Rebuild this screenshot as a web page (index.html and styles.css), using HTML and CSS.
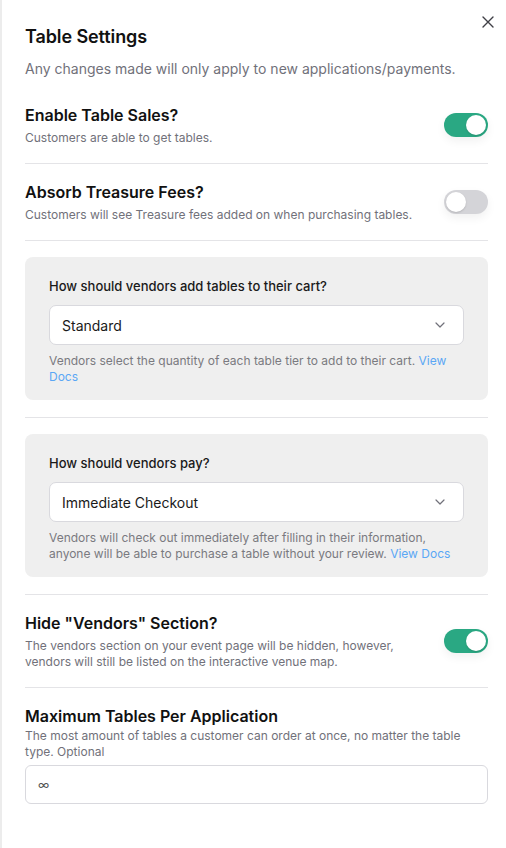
FILE: index.html
```html
<!DOCTYPE html>
<html>
<head>
<meta charset="utf-8">
<link rel="stylesheet" href="styles.css">
</head>
<body>
<div class="panel">
  <button class="close" aria-label="Close">
    <svg width="12" height="12" viewBox="0 0 12 12"><path d="M1 1L11 11M11 1L1 11" stroke="#3f3f46" stroke-width="1.4" stroke-linecap="round"/></svg>
  </button>
  <h1 class="title">Table Settings</h1>
  <p class="subtitle">Any changes made will only apply to new applications/payments.</p>

  <div class="row first">
    <div class="text">
      <h2 class="heading">Enable Table Sales?</h2>
      <p class="desc">Customers are able to get tables.</p>
    </div>
    <span class="toggle on"><span class="knob"></span></span>
  </div>

  <div class="row">
    <div class="text">
      <h2 class="heading">Absorb Treasure Fees?</h2>
      <p class="desc">Customers will see Treasure fees added on when purchasing tables.</p>
    </div>
    <span class="toggle"><span class="knob"></span></span>
  </div>

  <div class="row block">
    <div class="box">
      <div class="label">How should vendors add tables to their cart?</div>
      <div class="select">
        <span>Standard</span>
        <svg width="10" height="6" viewBox="0 0 10 6"><path d="M1 1L5 5L9 1" fill="none" stroke="#71717a" stroke-width="1.2" stroke-linecap="round" stroke-linejoin="round"/></svg>
      </div>
      <p class="help">Vendors select the quantity of each table tier to add to their cart. <a href="#">View Docs</a></p>
    </div>
  </div>

  <div class="row block">
    <div class="box">
      <div class="label">How should vendors pay?</div>
      <div class="select">
        <span>Immediate Checkout</span>
        <svg width="10" height="6" viewBox="0 0 10 6"><path d="M1 1L5 5L9 1" fill="none" stroke="#71717a" stroke-width="1.2" stroke-linecap="round" stroke-linejoin="round"/></svg>
      </div>
      <p class="help">Vendors will check out immediately after filling in their information, anyone will be able to purchase a table without your review. <a href="#">View Docs</a></p>
    </div>
  </div>

  <div class="row">
    <div class="text narrow">
      <h2 class="heading">Hide "Vendors" Section?</h2>
      <p class="desc">The vendors section on your event page will be hidden, however, vendors will still be listed on the interactive venue map.</p>
    </div>
    <span class="toggle on"><span class="knob"></span></span>
  </div>

  <div class="row last">
    <div class="text full">
      <h2 class="heading">Maximum Tables Per Application</h2>
      <p class="desc tight">The most amount of tables a customer can order at once, no matter the table type. Optional</p>
      <div class="input">∞</div>
    </div>
  </div>
</div>
</body>
</html>
```

FILE: styles.css
```css
* { box-sizing: border-box; }
html, body { margin: 0; padding: 0; background: #fff; }
body {
  font-family: Inter, "Noto Sans", sans-serif;
  color: #18181b;
  -webkit-font-smoothing: antialiased;
}
.panel {
  position: relative;
  min-height: 848px;
  border-left: 2px solid #ececec;
  padding: 25px 18px 0 23px;
}
.close {
  position: absolute;
  top: 16px;
  right: 12px;
  width: 12px;
  height: 12px;
  padding: 0;
  border: 0;
  background: none;
  display: flex;
}
.title {
  margin: 0;
  font-size: 18px;
  line-height: 24px;
  font-weight: 600;
  color: #111;
  letter-spacing: -0.1px;
}
.subtitle {
  margin: 10px 0 0;
  font-size: 14px;
  line-height: 20px;
  color: #71717a;
}
.row {
  display: flex;
  align-items: center;
  justify-content: space-between;
  padding: 16px 0 17px;
  border-bottom: 1px solid #e4e4e7;
}
.row.first { padding-top: 24px; }
.row.last { border-bottom: 0; }
.text { flex: 1; min-width: 0; }
.text.narrow { max-width: 400px; }
.heading {
  margin: 0;
  font-size: 16px;
  line-height: 24px;
  font-weight: 600;
  color: #111;
}
.desc {
  margin: 3px 0 0;
  font-size: 12px;
  line-height: 16px;
  color: #71717a;
}
.desc.tight { margin-top: 0; line-height: 16px; }
.toggle {
  flex: none;
  width: 44px;
  height: 24px;
  border-radius: 12px;
  background: #d4d4d8;
  padding: 2px;
  display: flex;
  box-shadow: 0 4px 10px rgba(0,0,0,0.06);
}
.toggle.on {
  background: #2aa883;
  justify-content: flex-end;
}
.knob {
  width: 20px;
  height: 20px;
  border-radius: 50%;
  background: #fff;
  box-shadow: 0 1px 2px rgba(0,0,0,0.15);
}
.box {
  flex: 1;
  background: #efefef;
  border-radius: 8px;
  padding: 20px 24px 15px;
}
.label {
  font-size: 13px;
  line-height: 18px;
  font-weight: 500;
  color: #1a1a1a;
}
.select {
  margin-top: 10px;
  height: 40px;
  background: #fff;
  border: 1px solid #d9d9de;
  border-radius: 7px;
  display: flex;
  align-items: center;
  justify-content: space-between;
  padding: 0 18px 0 12px;
  font-size: 14px;
  color: #1a1a1a;
}
.help {
  margin: 8px 0 0;
  font-size: 12px;
  line-height: 16px;
  color: #7a7a80;
}
.help a {
  color: #5aa7f5;
  text-decoration: none;
}
.input {
  margin-top: 5px;
  height: 39px;
  border: 1px solid #d9d9de;
  border-radius: 6px;
  display: flex;
  align-items: center;
  padding: 0 12px;
  font-size: 12px;
  color: #555;
}
```
